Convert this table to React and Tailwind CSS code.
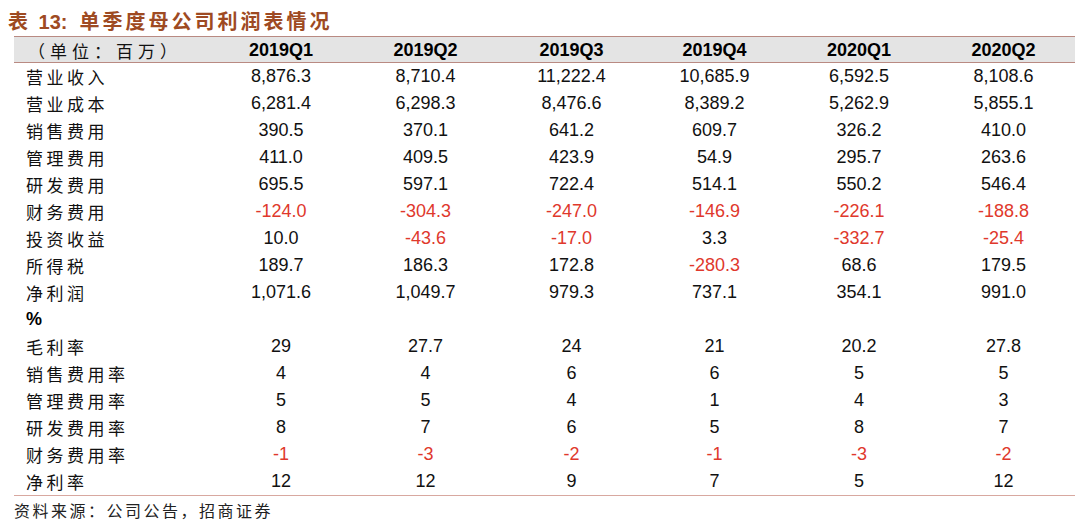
const cols = ["2019Q1", "2019Q2", "2019Q3", "2019Q4", "2020Q1", "2020Q2"];

const rows = [
  ["营业收入", ["8,876.3", "8,710.4", "11,222.4", "10,685.9", "6,592.5", "8,108.6"]],
  ["营业成本", ["6,281.4", "6,298.3", "8,476.6", "8,389.2", "5,262.9", "5,855.1"]],
  ["销售费用", ["390.5", "370.1", "641.2", "609.7", "326.2", "410.0"]],
  ["管理费用", ["411.0", "409.5", "423.9", "54.9", "295.7", "263.6"]],
  ["研发费用", ["695.5", "597.1", "722.4", "514.1", "550.2", "546.4"]],
  ["财务费用", ["-124.0", "-304.3", "-247.0", "-146.9", "-226.1", "-188.8"]],
  ["投资收益", ["10.0", "-43.6", "-17.0", "3.3", "-332.7", "-25.4"]],
  ["所得税", ["189.7", "186.3", "172.8", "-280.3", "68.6", "179.5"]],
  ["净利润", ["1,071.6", "1,049.7", "979.3", "737.1", "354.1", "991.0"]],
  ["%", null],
  ["毛利率", ["29", "27.7", "24", "21", "20.2", "27.8"]],
  ["销售费用率", ["4", "4", "6", "6", "5", "5"]],
  ["管理费用率", ["5", "5", "4", "1", "4", "3"]],
  ["研发费用率", ["8", "7", "6", "5", "8", "7"]],
  ["财务费用率", ["-1", "-3", "-2", "-1", "-3", "-2"]],
  ["净利率", ["12", "12", "9", "7", "5", "12"]],
];

const grid = "grid grid-cols-[197px_140px_149px_143px_143px_146px_143px]";
const cjk = "font-['Noto_Sans_CJK_SC',sans-serif]";
const num = "font-['Liberation_Sans',Arial,sans-serif]";

const App = () => {
  return (
    <div className="w-[1080px] h-[530px] bg-white overflow-hidden relative">
      <div className="pl-[8px] pt-[6px] h-[36px] flex items-center">
        <span className={`${cjk} text-[20px] font-bold text-[#9e4a22] leading-none tracking-[3px]`}>
          表 <span className={`${num} font-bold tracking-normal`}>13:</span>
          <span className="inline-block w-[12px]" />
          单季度母公司利润表情况
        </span>
      </div>

      <div className="ml-[14px] w-[1061px]">
        <div className={`${grid} h-[27px] bg-[#e4e4e4] border-y border-[#b98a82] items-center`}>
          <div className={`${cjk} text-[17px] text-[#111] pl-[14px] tracking-[5px]`}>（单位：百万）</div>
          {cols.map((c) => (
            <div key={c} className={`${num} text-[18px] font-bold text-black text-center`}>
              {c}
            </div>
          ))}
        </div>

        <div className="border-b border-[#d8a8a0]">
          {rows.map(([label, vals]) => (
            <div key={label} className={`${grid} h-[27px] items-center`}>
              {vals ? (
                <div className={`${cjk} text-[17px] text-[#111] pl-[12px] tracking-[3.5px]`}>{label}</div>
              ) : (
                <div className={`${num} text-[18px] font-bold text-black pl-[12px]`}>{label}</div>
              )}
              {vals &&
                vals.map((v, i) => (
                  <div
                    key={i}
                    className={`${num} text-[18px] text-center ${v.startsWith("-") ? "text-[#e0382c]" : "text-[#111]"}`}
                  >
                    {v}
                  </div>
                ))}
            </div>
          ))}
        </div>
      </div>

      <div className={`${cjk} text-[16px] text-[#222] pl-[14px] pt-[2px] tracking-[2.5px]`}>
        资料来源：公司公告，招商证券
      </div>
    </div>
  );
};

export default App;
